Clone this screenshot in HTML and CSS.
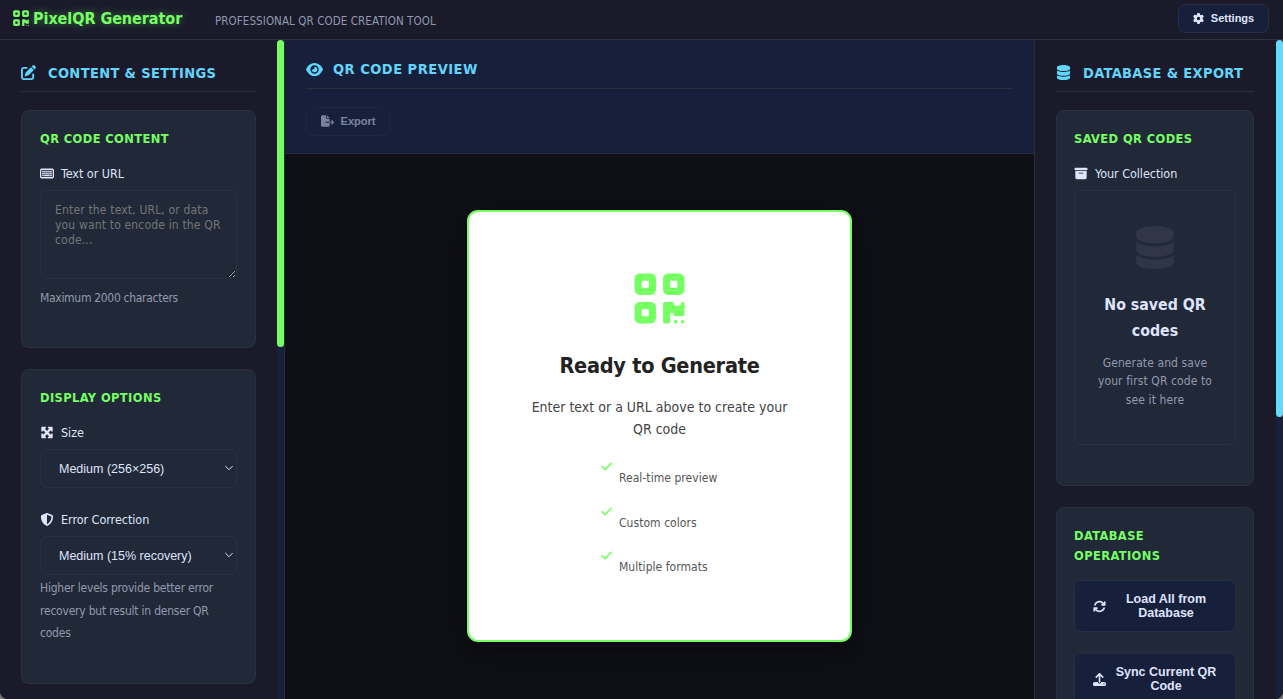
FILE: index.html
```html
<!DOCTYPE html>
<html lang="en">
<head>
  <meta charset="UTF-8">
  <meta name="viewport" content="width=device-width, initial-scale=1.0">
  <title>PixelQR Generator</title>
  <link rel="stylesheet" href="styles.css">
</head>
<body>
  <!-- Icon sprite -->
  <svg class="sprite" xmlns="http://www.w3.org/2000/svg">
    <symbol id="i-qrcode" viewBox="0 0 448 512"><path d="M0 80C0 53.5 21.5 32 48 32l96 0c26.5 0 48 21.5 48 48l0 96c0 26.5-21.5 48-48 48l-96 0c-26.5 0-48-21.5-48-48L0 80zM64 96l0 64 64 0 0-64L64 96zM0 336c0-26.5 21.5-48 48-48l96 0c26.5 0 48 21.5 48 48l0 96c0 26.5-21.5 48-48 48l-96 0c-26.5 0-48-21.5-48-48l0-96zm64 16l0 64 64 0 0-64-64 0zM304 32l96 0c26.5 0 48 21.5 48 48l0 96c0 26.5-21.5 48-48 48l-96 0c-26.5 0-48-21.5-48-48l0-96c0-26.5 21.5-48 48-48zm80 64l-64 0 0 64 64 0 0-64zM256 304c0-8.8 7.2-16 16-16l64 0c8.8 0 16 7.2 16 16s7.2 16 16 16l32 0c8.8 0 16-7.2 16-16s7.2-16 16-16s16 7.2 16 16l0 96c0 8.8-7.2 16-16 16l-64 0c-8.8 0-16-7.2-16-16s-7.2-16-16-16s-16 7.2-16 16l0 64c0 8.8-7.2 16-16 16l-32 0c-8.8 0-16-7.2-16-16l0-160zM368 480a16 16 0 1 1 0-32 16 16 0 1 1 0 32zm64 0a16 16 0 1 1 0-32 16 16 0 1 1 0 32z"/></symbol>
    <symbol id="i-edit" viewBox="0 0 512 512"><path d="M471.6 21.7c-21.9-21.9-57.3-21.9-79.2 0L362.3 51.7l97.9 97.9 30.1-30.1c21.9-21.9 21.9-57.3 0-79.2L471.6 21.7zm-299.2 220c-6.1 6.1-10.8 13.6-13.5 21.9l-29.6 88.8c-2.9 8.6-.6 18.1 5.8 24.6s15.9 8.7 24.6 5.8l88.8-29.6c8.2-2.7 15.7-7.4 21.9-13.5L437.7 172.3 339.7 74.3 172.4 241.7zM96 64C43 64 0 107 0 160L0 416c0 53 43 96 96 96l256 0c53 0 96-43 96-96l0-96c0-17.7-14.3-32-32-32s-32 14.3-32 32l0 96c0 17.7-14.3 32-32 32L96 448c-17.7 0-32-14.3-32-32l0-256c0-17.7 14.3-32 32-32l96 0c17.7 0 32-14.3 32-32s-14.3-32-32-32L96 64z"/></symbol>
    <symbol id="i-eye" viewBox="0 0 576 512"><path d="M288 32c-80.8 0-145.5 36.8-192.6 80.6C48.6 156 17.3 208 2.5 243.7c-3.3 7.9-3.3 16.7 0 24.6C17.3 304 48.6 356 95.4 399.4C142.5 443.2 207.2 480 288 480s145.5-36.8 192.6-80.6c46.8-43.5 78.1-95.4 93-131.1c3.3-7.9 3.3-16.7 0-24.6c-14.9-35.7-46.2-87.7-93-131.1C433.5 68.8 368.8 32 288 32zM144 256a144 144 0 1 1 288 0 144 144 0 1 1 -288 0zm144-64c0 35.3-28.7 64-64 64c-7.1 0-13.9-1.2-20.3-3.3c-5.5-1.8-11.9 1.6-11.7 7.4c.3 6.9 1.3 13.8 3.2 20.7c13.7 51.2 66.4 81.6 117.6 67.9s81.6-66.4 67.9-117.6c-11.1-41.5-47.8-69.4-88.6-71.1c-5.8-.2-9.2 6.1-7.4 11.7c2.1 6.4 3.3 13.2 3.3 20.3z"/></symbol>
    <symbol id="i-database" viewBox="0 0 448 512"><path d="M448 80l0 48c0 44.2-100.3 80-224 80S0 172.2 0 128L0 80C0 35.8 100.3 0 224 0S448 35.8 448 80zM393.2 214.7c20.8-7.4 39.9-16.9 54.8-28.6L448 288c0 44.2-100.3 80-224 80S0 332.2 0 288L0 186.1c14.9 11.8 34 21.2 54.8 28.6C99.7 230.7 159.5 240 224 240s124.3-9.3 169.2-25.3zM0 346.1c14.9 11.8 34 21.2 54.8 28.6C99.7 390.7 159.5 400 224 400s124.3-9.3 169.2-25.3c20.8-7.4 39.9-16.9 54.8-28.6l0 85.9c0 44.2-100.3 80-224 80S0 476.2 0 432l0-85.9z"/></symbol>
    <symbol id="i-gear" viewBox="0 0 512 512"><path d="M495.9 166.6c3.2 8.7 .5 18.4-6.4 24.6l-43.3 39.4c1.1 8.3 1.7 16.8 1.7 25.4s-.6 17.1-1.7 25.4l43.3 39.4c6.9 6.2 9.6 15.9 6.4 24.6c-4.4 11.9-9.7 23.3-15.8 34.3l-4.7 8.1c-6.6 11-14 21.4-22.1 31.2c-5.9 7.2-15.7 9.6-24.5 6.8l-55.7-17.7c-13.4 10.3-28.2 18.9-44 25.4l-12.5 57.1c-2 9.1-9 16.3-18.2 17.8c-13.8 2.3-28 3.5-42.5 3.5s-28.7-1.2-42.5-3.5c-9.2-1.5-16.2-8.7-18.2-17.8l-12.5-57.1c-15.8-6.5-30.6-15.1-44-25.4L83.1 425.9c-8.8 2.8-18.6 .3-24.5-6.8c-8.1-9.8-15.5-20.2-22.1-31.2l-4.7-8.1c-6.1-11-11.4-22.4-15.8-34.3c-3.2-8.7-.5-18.4 6.4-24.6l43.3-39.4C64.6 273.1 64 264.6 64 256s.6-17.1 1.7-25.4L22.4 191.2c-6.9-6.2-9.6-15.9-6.4-24.6c4.4-11.9 9.7-23.3 15.8-34.3l4.7-8.1c6.6-11 14-21.4 22.1-31.2c5.9-7.2 15.7-9.6 24.5-6.8l55.7 17.7c13.4-10.3 28.2-18.9 44-25.4l12.5-57.1c2-9.1 9-16.3 18.2-17.8C227.3 1.2 241.5 0 256 0s28.7 1.2 42.5 3.5c9.2 1.5 16.2 8.7 18.2 17.8l12.5 57.1c15.8 6.5 30.6 15.1 44 25.4l55.7-17.7c8.8-2.8 18.6-.3 24.5 6.8c8.1 9.8 15.5 20.2 22.1 31.2l4.7 8.1c6.1 11 11.4 22.4 15.8 34.3zM256 336a80 80 0 1 0 0-160 80 80 0 1 0 0 160z"/></symbol>
    <symbol id="i-export" viewBox="0 0 576 512"><path d="M0 64C0 28.7 28.7 0 64 0L224 0l0 128c0 17.7 14.3 32 32 32l128 0 0 128-168 0c-13.3 0-24 10.7-24 24s10.7 24 24 24l168 0 0 112c0 35.3-28.7 64-64 64L64 512c-35.3 0-64-28.7-64-64L0 64zM384 336l0-48 110.1 0-39-39c-9.4-9.4-9.4-24.6 0-33.9s24.6-9.4 33.9 0l80 80c9.4 9.4 9.4 24.6 0 33.9l-80 80c-9.4 9.4-24.6 9.4-33.9 0s-9.4-24.6 0-33.9l39-39L384 336zm0-208l-128 0L256 0 384 128z"/></symbol>
    <symbol id="i-keyboard" viewBox="0 0 576 512"><path fill-rule="evenodd" d="M64 54h448a64 64 0 0 1 64 64v276a64 64 0 0 1-64 64H64a64 64 0 0 1-64-64V118a64 64 0 0 1 64-64zm0 58a12 12 0 0 0-12 12v264a12 12 0 0 0 12 12h448a12 12 0 0 0 12-12V124a12 12 0 0 0-12-12z"/><path d="M90 146h66v58H90zM172 146h66v58h-66zM254 146h66v58h-66zM336 146h66v58h-66zM418 146h68v58h-68zM90 226h66v58H90zM172 226h66v58h-66zM254 226h66v58h-66zM336 226h66v58h-66zM418 226h68v58h-68zM90 308h66v58H90zM172 308h230v58H172zM418 308h68v58h-68z"/></symbol>
    <symbol id="i-maximize" viewBox="0 0 512 512"><path d="M200 32L56 32C42.7 32 32 42.7 32 56l0 144c0 9.7 5.8 18.5 14.8 22.2s19.3 1.7 26.2-5.2l40-40 79 79-79 79L73 295c-6.9-6.9-17.2-8.9-26.2-5.2S32 302.3 32 312l0 144c0 13.3 10.7 24 24 24l144 0c9.7 0 18.5-5.8 22.2-14.8s1.7-19.3-5.2-26.2l-40-40 79-79 79 79-40 40c-6.9 6.9-8.9 17.2-5.2 26.2s12.5 14.8 22.2 14.8l144 0c13.3 0 24-10.7 24-24l0-144c0-9.7-5.8-18.5-14.8-22.2s-19.3-1.7-26.2 5.2l-40 40-79-79 79-79 40 40c6.9 6.9 17.2 8.9 26.2 5.2s14.8-12.5 14.8-22.2l0-144c0-13.3-10.7-24-24-24L312 32c-9.7 0-18.5 5.8-22.2 14.8s-1.7 19.3 5.2 26.2l40 40-79 79-79-79 40-40c6.9-6.9 8.9-17.2 5.2-26.2S209.7 32 200 32z"/></symbol>
    <symbol id="i-shield" viewBox="0 0 512 512"><path d="M256 0c4.6 0 9.2 1 13.4 2.9L457.7 82.8c22 9.3 38.4 31 38.3 57.2c-.5 99.2-41.3 280.7-213.6 363.2c-16.7 8-36.1 8-52.8 0C57.3 420.7 16.5 239.2 16 140c-.1-26.2 16.3-47.9 38.3-57.2L242.7 2.9C246.8 1 251.4 0 256 0zm0 66.8l0 378.1C394 378 431.1 230.1 432 141.4L256 66.8z"/></symbol>
    <symbol id="i-archive" viewBox="0 0 512 512"><path d="M32 32l448 0c17.7 0 32 14.3 32 32l0 32c0 17.7-14.3 32-32 32L32 128C14.3 128 0 113.7 0 96L0 64C0 46.3 14.3 32 32 32zm0 128l448 0 0 256c0 35.3-28.7 64-64 64L96 480c-35.3 0-64-28.7-64-64l0-256zm128 80c0 8.8 7.2 16 16 16l160 0c8.8 0 16-7.2 16-16s-7.2-16-16-16l-160 0c-8.8 0-16 7.2-16 16z"/></symbol>
    <symbol id="i-check" viewBox="0 0 448 512"><path d="M438.6 105.4c12.5 12.5 12.5 32.8 0 45.3l-256 256c-12.5 12.5-32.8 12.5-45.3 0l-128-128c-12.5-12.5-12.5-32.8 0-45.3s32.8-12.5 45.3 0L160 338.7 393.4 105.4c12.5-12.5 32.8-12.5 45.3 0z"/></symbol>
    <symbol id="i-sync" viewBox="0 0 512 512"><path d="M105.1 202.6c7.7-21.8 20.2-42.3 37.8-59.8c62.5-62.5 163.8-62.5 226.3 0L386.3 160 352 160c-17.7 0-32 14.3-32 32s14.3 32 32 32l111.9 0c17.7 0 32-14.3 32-32l0-112c0-17.7-14.3-32-32-32s-32 14.3-32 32l0 35.2L414.4 97.6c-87.5-87.5-229.3-87.5-316.8 0C73.2 122 55.6 150.7 44.8 181.4c-5.9 16.7 2.9 34.9 19.5 40.8s34.9-2.9 40.8-19.5zM39 289.3c-5 1.5-9.8 4.2-13.7 8.2c-4 4-6.7 8.8-8.1 14c-.3 1.2-.6 2.5-.8 3.8c-.3 1.7-.4 3.4-.4 5.1L16 432c0 17.7 14.3 32 32 32s32-14.3 32-32l0-35.1 17.6 17.5c87.5 87.4 229.3 87.4 316.7 0c24.4-24.4 42.1-53.1 52.9-83.8c5.9-16.7-2.9-34.9-19.5-40.8s-34.9 2.9-40.8 19.5c-7.7 21.8-20.2 42.3-37.8 59.8c-62.5 62.5-163.8 62.5-226.3 0l-.1-.1L125.6 352l34.4 0c17.7 0 32-14.3 32-32s-14.3-32-32-32L48.4 288c-1.6 0-3.2 .1-4.8 .3s-3.1 .5-4.6 1z"/></symbol>
    <symbol id="i-upload" viewBox="0 0 512 512"><path d="M288 109.3L288 352c0 17.7-14.3 32-32 32s-32-14.3-32-32l0-242.7-73.4 73.4c-12.5 12.5-32.8 12.5-45.3 0s-12.5-32.8 0-45.3l128-128c12.5-12.5 32.8-12.5 45.3 0l128 128c12.5 12.5 12.5 32.8 0 45.3s-32.8 12.5-45.3 0L288 109.3zM64 352l128 0c0 35.3 28.7 64 64 64s64-28.7 64-64l128 0c35.3 0 64 28.7 64 64l0 32c0 35.3-28.7 64-64 64L64 512c-35.3 0-64-28.7-64-64l0-32c0-35.3 28.7-64 64-64zM432 456a24 24 0 1 0 0-48 24 24 0 1 0 0 48z"/></symbol>
    <symbol id="i-chevron" viewBox="0 0 10 6"><path d="M1.300 1l3.700 3.700L8.700 1" fill="none" stroke="currentColor" stroke-width="1"/></symbol>
  </svg>

  <div class="app">
    <header class="app-header">
      <h1 class="logo"><svg class="icon"><use href="#i-qrcode"/></svg><span>PixelQR Generator</span></h1>
      <span class="tagline">Professional QR Code Creation Tool</span>
      <button class="btn btn-settings"><svg class="icon"><use href="#i-gear"/></svg>Settings</button>
    </header>

    <div class="main">
      <aside class="sidebar sidebar-left">
        <div class="sidebar-content">
          <h2 class="panel-title"><svg class="icon"><use href="#i-edit"/></svg><span>Content &amp; Settings</span></h2>

          <section class="card card-content">
            <h3>QR Code Content</h3>
            <label for="qrText"><svg class="icon icon-wide"><use href="#i-keyboard"/></svg>Text or URL</label>
            <textarea id="qrText" maxlength="2000" placeholder="Enter the text, URL, or data you want to encode in the QR code..."></textarea>
            <p class="hint">Maximum 2000 characters</p>
          </section>

          <section class="card card-display">
            <h3>Display Options</h3>
            <label for="qrSize"><svg class="icon icon-wide"><use href="#i-maximize"/></svg>Size</label>
            <div class="select-wrap">
              <select id="qrSize">
                <option>Medium (256×256)</option>
              </select>
              <svg class="chevron"><use href="#i-chevron"/></svg>
            </div>
            <label for="errorLevel" class="second"><svg class="icon icon-wide"><use href="#i-shield"/></svg>Error Correction</label>
            <div class="select-wrap">
              <select id="errorLevel">
                <option>Medium (15% recovery)</option>
              </select>
              <svg class="chevron"><use href="#i-chevron"/></svg>
            </div>
            <p class="hint hint-small">Higher levels provide better error recovery but result in denser QR codes</p>
          </section>
        </div>
        <div class="scrollbar"><div class="thumb thumb-green"></div></div>
      </aside>

      <main class="preview">
        <div class="preview-header">
          <h2 class="panel-title"><svg class="icon icon-eye"><use href="#i-eye"/></svg><span>QR Code Preview</span></h2>
          <button class="btn btn-export" disabled><svg class="icon"><use href="#i-export"/></svg>Export</button>
        </div>
        <div class="preview-area">
          <div class="placeholder">
            <svg class="icon placeholder-icon"><use href="#i-qrcode"/></svg>
            <h3>Ready to Generate</h3>
            <p>Enter text or a URL above to create your QR code</p>
            <ul>
              <li><svg class="icon"><use href="#i-check"/></svg><span>Real-time preview</span></li>
              <li><svg class="icon"><use href="#i-check"/></svg><span>Custom colors</span></li>
              <li><svg class="icon"><use href="#i-check"/></svg><span>Multiple formats</span></li>
            </ul>
          </div>
        </div>
      </main>

      <aside class="sidebar sidebar-right">
        <div class="sidebar-content">
          <h2 class="panel-title"><svg class="icon"><use href="#i-database"/></svg><span>Database &amp; Export</span></h2>

          <section class="card card-saved">
            <h3>Saved QR Codes</h3>
            <label><svg class="icon icon-wide"><use href="#i-archive"/></svg>Your Collection</label>
            <div class="collection">
              <svg class="icon empty-icon"><use href="#i-database"/></svg>
              <h4>No saved QR codes</h4>
              <p>Generate and save your first QR code to see it here</p>
            </div>
          </section>

          <section class="card card-database">
            <h3>Database Operations</h3>
            <button class="btn btn-block"><svg class="icon"><use href="#i-sync"/></svg><span>Load All from Database</span></button>
            <button class="btn btn-block"><svg class="icon"><use href="#i-upload"/></svg><span>Sync Current QR Code</span></button>
          </section>
        </div>
        <div class="scrollbar"><div class="thumb thumb-blue"></div></div>
      </aside>
    </div>
  </div>
</body>
</html>
```
FILE: styles.css
```css
:root {
  --bg: #0f0f17;
  --panel: #1a1a2b;
  --navy: #17203b;
  --card: #212938;
  --border: #2b3140;
  --green: #75ff63;
  --cyan: #61d5fa;
  --text: #dfe3fb;
  --muted: #9199ae;
}

* {
  box-sizing: border-box;
  margin: 0;
  padding: 0;
}

body {
  height: 100vh;
  overflow: hidden;
  background: #77777a;
  color: var(--text);
  font-family: 'DejaVu Sans Condensed', 'DejaVu Sans', sans-serif;
  font-stretch: condensed;
  font-size: 12.5px;
}

.sprite {
  display: none;
}

.icon {
  display: block;
  flex: none;
  width: 13px;
  height: 13px;
  fill: currentColor;
}

.app {
  height: 100vh;
  display: flex;
  flex-direction: column;
  overflow: hidden;
  background: var(--bg);
  border-radius: 0 0 8px 8px;
}

/* Header */
.app-header {
  display: flex;
  align-items: center;
  height: 40px;
  padding: 0 14px 3px 13px;
  background: var(--panel);
  border-bottom: 1px solid #303040;
}

.logo {
  display: flex;
  align-items: center;
  gap: 4px;
  width: 202px;
  color: var(--green);
  font-size: 16px;
  letter-spacing: -0.05px;
  white-space: nowrap;
  text-shadow: 0 0 9px rgba(117, 255, 99, 0.45);
}

.logo .icon {
  width: 16px;
  height: 18px;
}

.tagline {
  padding-top: 5px;
  color: var(--muted);
  font-size: 11.5px;
  letter-spacing: 0.08px;
  text-transform: uppercase;
}

.btn {
  display: flex;
  align-items: center;
  justify-content: center;
  background: var(--navy);
  border: 1px solid #252e46;
  border-radius: 7px;
  color: var(--text);
  font-family: 'Liberation Sans', Arial, sans-serif;
  font-weight: bold;
}

.btn-settings {
  width: 91px;
  height: 29px;
  margin-left: auto;
  gap: 7px;
  font-size: 11px;
}

.btn-settings .icon {
  width: 11px;
  height: 11px;
}

/* Columns */
.main {
  display: flex;
  flex: 1;
  min-height: 0;
}

.sidebar {
  display: flex;
  flex: none;
  background: var(--panel);
}

.sidebar-left {
  width: 285px;
  border-right: 1px solid #272d3b;
}

.sidebar-right {
  width: 249px;
  border-left: 1px solid #272d3b;
}

.sidebar-content {
  flex: 1;
  min-width: 0;
  overflow: hidden;
  padding: 22px 21px 0;
}

.sidebar-right .sidebar-content {
  padding-right: 22px;
}

.scrollbar {
  width: 7px;
  background: var(--navy);
}

.thumb {
  border-radius: 4px;
}

.thumb-green {
  height: 307px;
  background: var(--green);
}

.thumb-blue {
  height: 377px;
  background: #66d9ff;
}

.panel-title {
  display: flex;
  align-items: center;
  gap: 12px;
  height: 30px;
  margin-bottom: 18px;
  padding-bottom: 8px;
  border-bottom: 1px solid #2b2e3d;
  color: var(--cyan);
  font-size: 14.5px;
  text-transform: uppercase;
  letter-spacing: 0.35px;
  white-space: nowrap;
}

.panel-title .icon {
  width: 15px;
  height: 15px;
}

/* Cards */
.card {
  padding: 18px;
  background: var(--card);
  border: 1px solid var(--border);
  border-radius: 8px;
  margin-bottom: 21px;
}

.sidebar-right .card {
  padding-left: 17px;
  padding-right: 17px;
}

.card-content {
  height: 238px;
}

.card-display {
  height: 315px;
}

.card-saved {
  height: 376px;
}

.card-database {
  height: 260px;
}

.card h3 {
  margin-bottom: 15px;
  color: var(--green);
  font-size: 12.75px;
  line-height: 20px;
  letter-spacing: 0.4px;
  text-transform: uppercase;
}

.card label {
  display: flex;
  align-items: center;
  gap: 7px;
  height: 18px;
  margin-bottom: 8px;
  font-size: 12.5px;
  letter-spacing: -0.05px;
}

.icon-wide {
  width: 14px;
}

textarea {
  display: block;
  width: 197px;
  height: 89px;
  padding: 12px 14px;
  background: transparent;
  border: 1px solid var(--border);
  border-radius: 7px;
  color: var(--text);
  font-family: inherit;
  font-size: 12px;
  line-height: 15px;
  letter-spacing: 0.17px;
  overflow: hidden;
}

textarea::placeholder {
  color: #757575;
}

.hint {
  margin-top: 8px;
  color: var(--muted);
  font-size: 12px;
  line-height: 22.7px;
  letter-spacing: -0.3px;
}

.card .hint-small {
  margin-top: 2px;
  letter-spacing: -0.22px;
}

.select-wrap {
  position: relative;
  height: 39px;
}

select {
  width: 100%;
  height: 39px;
  padding: 0 18px;
  appearance: none;
  background: transparent;
  border: 1px solid var(--border);
  border-radius: 7px;
  color: var(--text);
  font-family: 'Liberation Sans', Arial, sans-serif;
  font-size: 12.5px;
}

.chevron {
  position: absolute;
  top: 16px;
  right: 3px;
  width: 10px;
  height: 6px;
}

.card label.second {
  margin-top: 22px;
}

/* Preview */
.preview {
  display: flex;
  flex: 1;
  flex-direction: column;
  min-width: 0;
}

.preview-header {
  height: 114px;
  padding: 19px 21px 0;
  background: var(--navy);
  border-bottom: 1px solid #252e46;
}

.preview-header .panel-title {
  gap: 10px;
  padding-bottom: 9px;
  letter-spacing: 0.5px;
}

.panel-title .icon-eye {
  width: 17px;
}

.btn-export {
  width: 84px;
  height: 29px;
  gap: 7px;
  padding-bottom: 2px;
  font-size: 11px;
  opacity: 0.5;
}

.btn-export .icon {
  height: 12px;
}

.preview-area {
  display: flex;
  flex: 1;
  align-items: flex-start;
  justify-content: center;
  padding-top: 56px;
}

.placeholder {
  display: flex;
  flex-direction: column;
  align-items: center;
  width: 385px;
  height: 432px;
  padding-top: 58px;
  background: #fff;
  border: 2px solid var(--green);
  border-radius: 11px;
  box-shadow: 0 10px 28px rgba(0, 0, 0, 0.5);
  text-align: center;
}

.placeholder-icon {
  width: 51px;
  height: 57px;
  color: var(--green);
}

.placeholder h3 {
  margin-top: 24px;
  color: #222;
  font-size: 21.5px;
  line-height: 30px;
  letter-spacing: -0.25px;
}

.placeholder p {
  width: 270px;
  margin-top: 16px;
  color: #444;
  font-size: 14px;
  line-height: 21.5px;
}

.placeholder ul {
  width: 117px;
  margin-top: 17px;
  list-style: none;
}

.placeholder li {
  display: flex;
  gap: 7px;
  height: 44.5px;
  color: #555;
  font-size: 12px;
  line-height: 22px;
  letter-spacing: 0.05px;
  white-space: nowrap;
}

.placeholder li .icon {
  width: 11px;
  margin-top: 3px;
  color: var(--green);
}

.placeholder li span {
  padding-top: 10px;
}

/* Database */
.collection {
  height: 255px;
  padding: 35px 18px 0;
  border: 1px solid var(--border);
  border-radius: 7px;
  text-align: center;
}

.empty-icon {
  width: 38px;
  height: 43px;
  margin: 0 auto 23px;
  color: #303647;
}

.collection h4 {
  font-size: 15.75px;
  line-height: 25.5px;
}

.collection p {
  margin-top: 10.5px;
  color: var(--muted);
  font-size: 12px;
  line-height: 18.7px;
  letter-spacing: 0.1px;
}

.card-database {
  padding-bottom: 0;
}

.card-database h3 {
  max-width: 130px;
  margin-bottom: 14px;
}

.btn-block {
  width: 100%;
  height: 52px;
  margin-bottom: 21px;
  gap: 8px;
  padding: 0 17px 0 18px;
  font-size: 12.5px;
  line-height: 14px;
}

.btn-block span {
  flex: 1;
}
```
